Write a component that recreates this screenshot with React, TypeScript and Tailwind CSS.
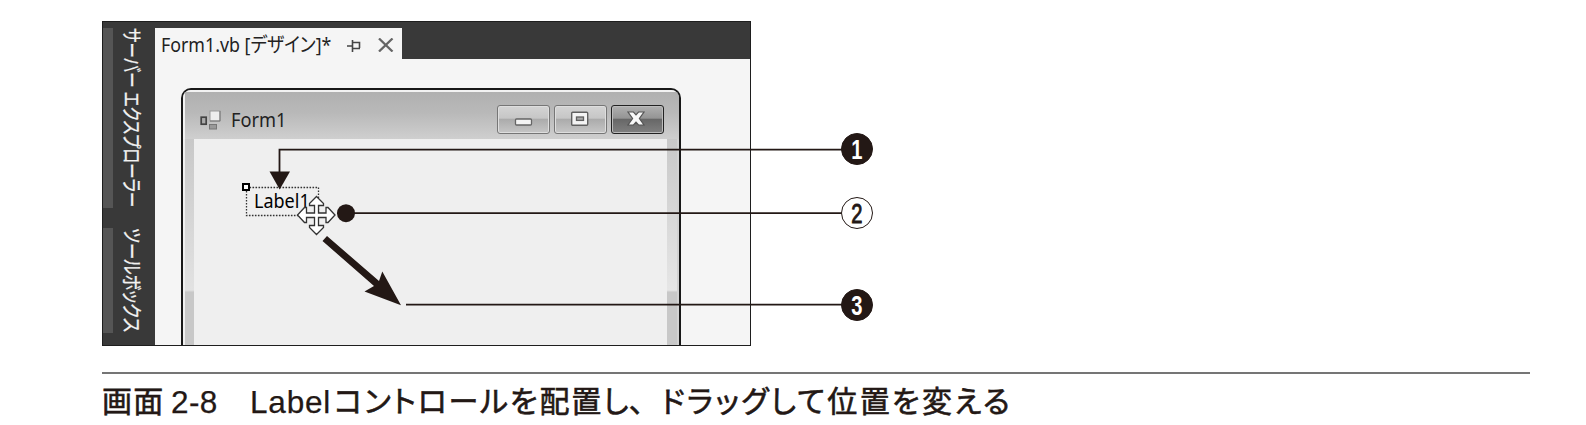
import React from "react";

function SideTab({ label, className, textClass }: { label: string; className: string; textClass: string }) {
  return (
    <div className={`flex shrink-0 ${className}`}>
      <div className="w-[10px] bg-[#555555]" />
      <div className="ml-[5px] flex w-[26px] items-start justify-center">
        <span
          className={`origin-top whitespace-nowrap text-[20.5px] leading-[26px] text-[#f2f2f2] [-webkit-text-stroke:0.3px_#f2f2f2] [font-feature-settings:'palt'] [text-orientation:sideways] [writing-mode:vertical-rl] ${textClass}`}
        >
          {label}
        </span>
      </div>
    </div>
  );
}

function TitleButton({ dark, children }: { dark?: boolean; children: React.ReactNode }) {
  return (
    <div
      className={`flex h-[29px] w-[53px] items-center justify-center rounded-[3px] border ${
        dark
          ? "border-[#222222] bg-[linear-gradient(#b0b0b0_0%,#949494_46%,#666666_47%,#808080_100%)] shadow-[inset_0_0_0_1px_#bcbcbc]"
          : "border-[#767676] bg-[linear-gradient(#d4d4d4_0%,#c6c6c6_46%,#aaaaaa_47%,#c6c6c6_100%)] shadow-[inset_0_0_0_1px_#dedede]"
      }`}
    >
      {children}
    </div>
  );
}

function Badge({ n, hollow, className }: { n: string; hollow?: boolean; className: string }) {
  return (
    <div
      className={`absolute left-[841px] flex size-[32px] items-center justify-center rounded-full border border-[#231815] ${
        hollow ? "bg-white text-[#231815]" : "bg-[#231815] text-white"
      } ${className}`}
    >
      <span className={`mt-[1px] scale-x-[0.72] text-[28px] leading-[30px] ${hollow ? "font-normal [-webkit-text-stroke:1px_#231815]" : "font-bold"}`}>{n}</span>
    </div>
  );
}

function FormWindow() {
  return (
    <div className="flex h-[258px] w-[500px] flex-col overflow-hidden rounded-t-[10px] border-x-2 border-t-2 border-[#181818] bg-[#c9c9c9]">
      <div className="flex h-[49px] shrink-0 items-start border-t-2 border-l-2 border-[#f2f2f2] bg-[linear-gradient(#b0b0b0,#b9b9b9_45%,#cfcfcf)]">
        <svg className="ml-[15px] mt-[18px] shrink-0" width="22" height="22" viewBox="0 0 22 22">
          <rect x="1.2" y="7.2" width="5" height="7" fill="#aaa" stroke="#444" strokeWidth="1.7" />
          <rect x="10" y="1" width="10" height="10" fill="#eee" stroke="#999" />
          <path d="M20 1V11H10" fill="none" stroke="#777" />
          <rect x="9.5" y="14.5" width="7" height="4.5" fill="#999" stroke="#777" />
        </svg>
        <span className="ml-[9px] mt-[14px] w-[60px] text-[20px] leading-[28px] text-[#222222] [font-family:'Noto_Sans',sans-serif]">
          <span className="inline-block origin-left scale-x-[0.91]">Form1</span>
        </span>
        <div className="ml-[206px] mt-[13px] flex gap-[4px]">
          <TitleButton>
            <svg width="20" height="12" viewBox="0 0 20 12" className="mt-[4px]">
              <rect x="1.5" y="3" width="16" height="6" rx="1" fill="#f4f4f4" stroke="#666" strokeWidth="1.3" />
            </svg>
          </TitleButton>
          <TitleButton>
            <svg width="20" height="16" viewBox="0 0 20 16" className="mb-[2px] mr-[2px]">
              <rect x="1.7" y="1.2" width="16" height="13" rx="1" fill="#f4f4f4" stroke="#606060" strokeWidth="1.4" />
              <rect x="6.5" y="6" width="7" height="3.4" fill="#aaa" stroke="#606060" strokeWidth="1.3" />
            </svg>
          </TitleButton>
          <TitleButton dark>
            <svg width="20" height="16" viewBox="0 0 20 16" className="mb-[1px] mr-[3px]">
              <path
                d="M2 1H7.5L10 3.8L12.5 1H18L13.4 7.5L18 14H12.5L10 11.2L7.5 14H2L6.6 7.5Z"
                fill="#f8f8f8"
                stroke="#555"
                strokeWidth="1.2"
              />
            </svg>
          </TitleButton>
        </div>
      </div>
      <div className="flex flex-1">
        <div className="w-[11px] border-l-2 border-[#f0f0f0] bg-[linear-gradient(#c8c8c8_0%,#e2e2e2_73%,#c8c8c8_74%,#c8c8c8_100%)]" />
        <div className="flex-1 bg-[#efefef]" />
        <div className="w-[12px] border-r-2 border-[#d2d2d2] bg-[linear-gradient(#c8c8c8_0%,#e6e6e6_73%,#c8c8c8_74%,#c8c8c8_100%)]" />
      </div>
    </div>
  );
}

function Annotations() {
  return (
    <svg className="absolute left-0 top-0" width="1586" height="425" viewBox="0 0 1586 425">
      <rect x="246.5" y="187.5" width="72" height="28" fill="none" stroke="#333333" strokeWidth="1.3" strokeDasharray="1.6 1.4" />
      <rect x="243" y="184" width="6" height="6" fill="#ffffff" stroke="#000000" strokeWidth="2" />
      <g fill="none" stroke="#231815" strokeWidth="1.8">
        <path d="M279.5 174V149.7H842" />
        <path d="M346 213.2H842" />
        <path d="M406 304.6H842" />
      </g>
      <path d="M269.5 171.5H290L279.7 189.5Z" fill="#231815" />
      <circle cx="346" cy="213.2" r="9" fill="#231815" />
      <path d="M327 236L379 281L382.3 271.5L401 305.3L364.5 291.5L374 286L322.5 241Z" fill="#231815" />
      <path
        d="M316.5 196.5L323.5 203.5V205.5H318.5V213H326V207.5H328L335 215L328 222.5H326V217.5H318.5V225.5H323.5V227.5L316.5 234.5L309.5 227.5V225.5H314.5V217.5H306.5V222.5H304.5L297.5 215L304.5 207.5H306.5V213H314.5V205.5H309.5V203.5Z"
        fill="#ffffff"
        stroke="#333333"
        strokeWidth="1.3"
      />
    </svg>
  );
}

export default function App() {
  return (
    <div className="relative h-[425px] w-[1586px] overflow-hidden bg-white pl-[102px] pt-[21px] [font-family:'Liberation_Sans','Noto_Sans_CJK_JP',sans-serif]">
      <div className="flex h-[325px] w-[649px] overflow-hidden border border-[#1e1e1e] bg-[#f5f5f5]">
        <div className="flex w-[52px] shrink-0 flex-col bg-[#393939] pt-[6px]">
          <SideTab label="サーバー エクスプローラー" className="h-[180px]" textClass="h-[180px] scale-y-[0.755]" />
          <SideTab label="ツールボックス" className="mt-[20px] h-[105px]" textClass="h-[105px] scale-y-[0.8]" />
        </div>
        <div className="flex flex-1 flex-col">
          <div className="flex h-[37px] shrink-0 items-start bg-[#393939] pt-[6px]">
            <div className="flex h-[31px] w-[247px] items-center bg-[#f5f5f5] pl-[6px]">
              <span className="mt-[2px] w-[174px] whitespace-nowrap text-[20px] leading-[30px] text-[#222222] [font-family:'Noto_Sans','Noto_Sans_CJK_JP',sans-serif] [font-feature-settings:'palt']">
                <span className="inline-block origin-left scale-x-[0.89]">Form1.vb [デザイン]*</span>
              </span>
              <svg width="16" height="14" viewBox="0 0 16 14" className="ml-[12px] mt-[4px]">
                <path d="M0 7H5M5.5 1V13M5.5 3.5H12.5V9M5.5 9.5H13" fill="none" stroke="#444" strokeWidth="1.6" />
              </svg>
              <svg width="16" height="14" viewBox="0 0 16 14" className="ml-[15px] mt-[3px]">
                <path d="M1 0.5L14.5 13.5M14.5 0.5L1 13.5" fill="none" stroke="#666" strokeWidth="2.3" />
              </svg>
            </div>
          </div>
          <div className="pl-[26px] pt-[29px]">
            <FormWindow />
          </div>
        </div>
      </div>
      <div className="mt-[26px] h-[2px] w-[1428px] bg-[#757575]" />
      <div className="mt-[6px] flex h-[44px] items-center whitespace-nowrap text-[30px] leading-[44px] text-[#231815] [-webkit-text-stroke:0.6px_#231815] [font-feature-settings:'palt']">
        <span className="w-[69px] tracking-[1.2px]">画面</span>
        <span className="w-[79px] text-[31.5px] tracking-[0.4px] [-webkit-text-stroke:0.25px_#231815]">2-8</span>
        <span className="w-[84px] text-[31.5px] tracking-[0.8px] [-webkit-text-stroke:0.25px_#231815]">Label</span>
        <span className="w-[293px] tracking-[1.8px]">コントロールを配置し</span>
        <span className="w-[34px] pl-[2px]">、</span>
        <span className="tracking-[2.3px]">ドラッグして位置を変える</span>
      </div>

      <div className="absolute left-[254px] top-[188px] w-[60px] text-[20px] leading-[26px] text-black [font-family:'Noto_Sans',sans-serif]">
        <span className="inline-block origin-left scale-x-[0.9]">Label1</span>
      </div>
      <Annotations />
      <Badge n="1" className="top-[133px]" />
      <Badge n="2" hollow className="top-[197px]" />
      <Badge n="3" className="top-[289px]" />
    </div>
  );
}
